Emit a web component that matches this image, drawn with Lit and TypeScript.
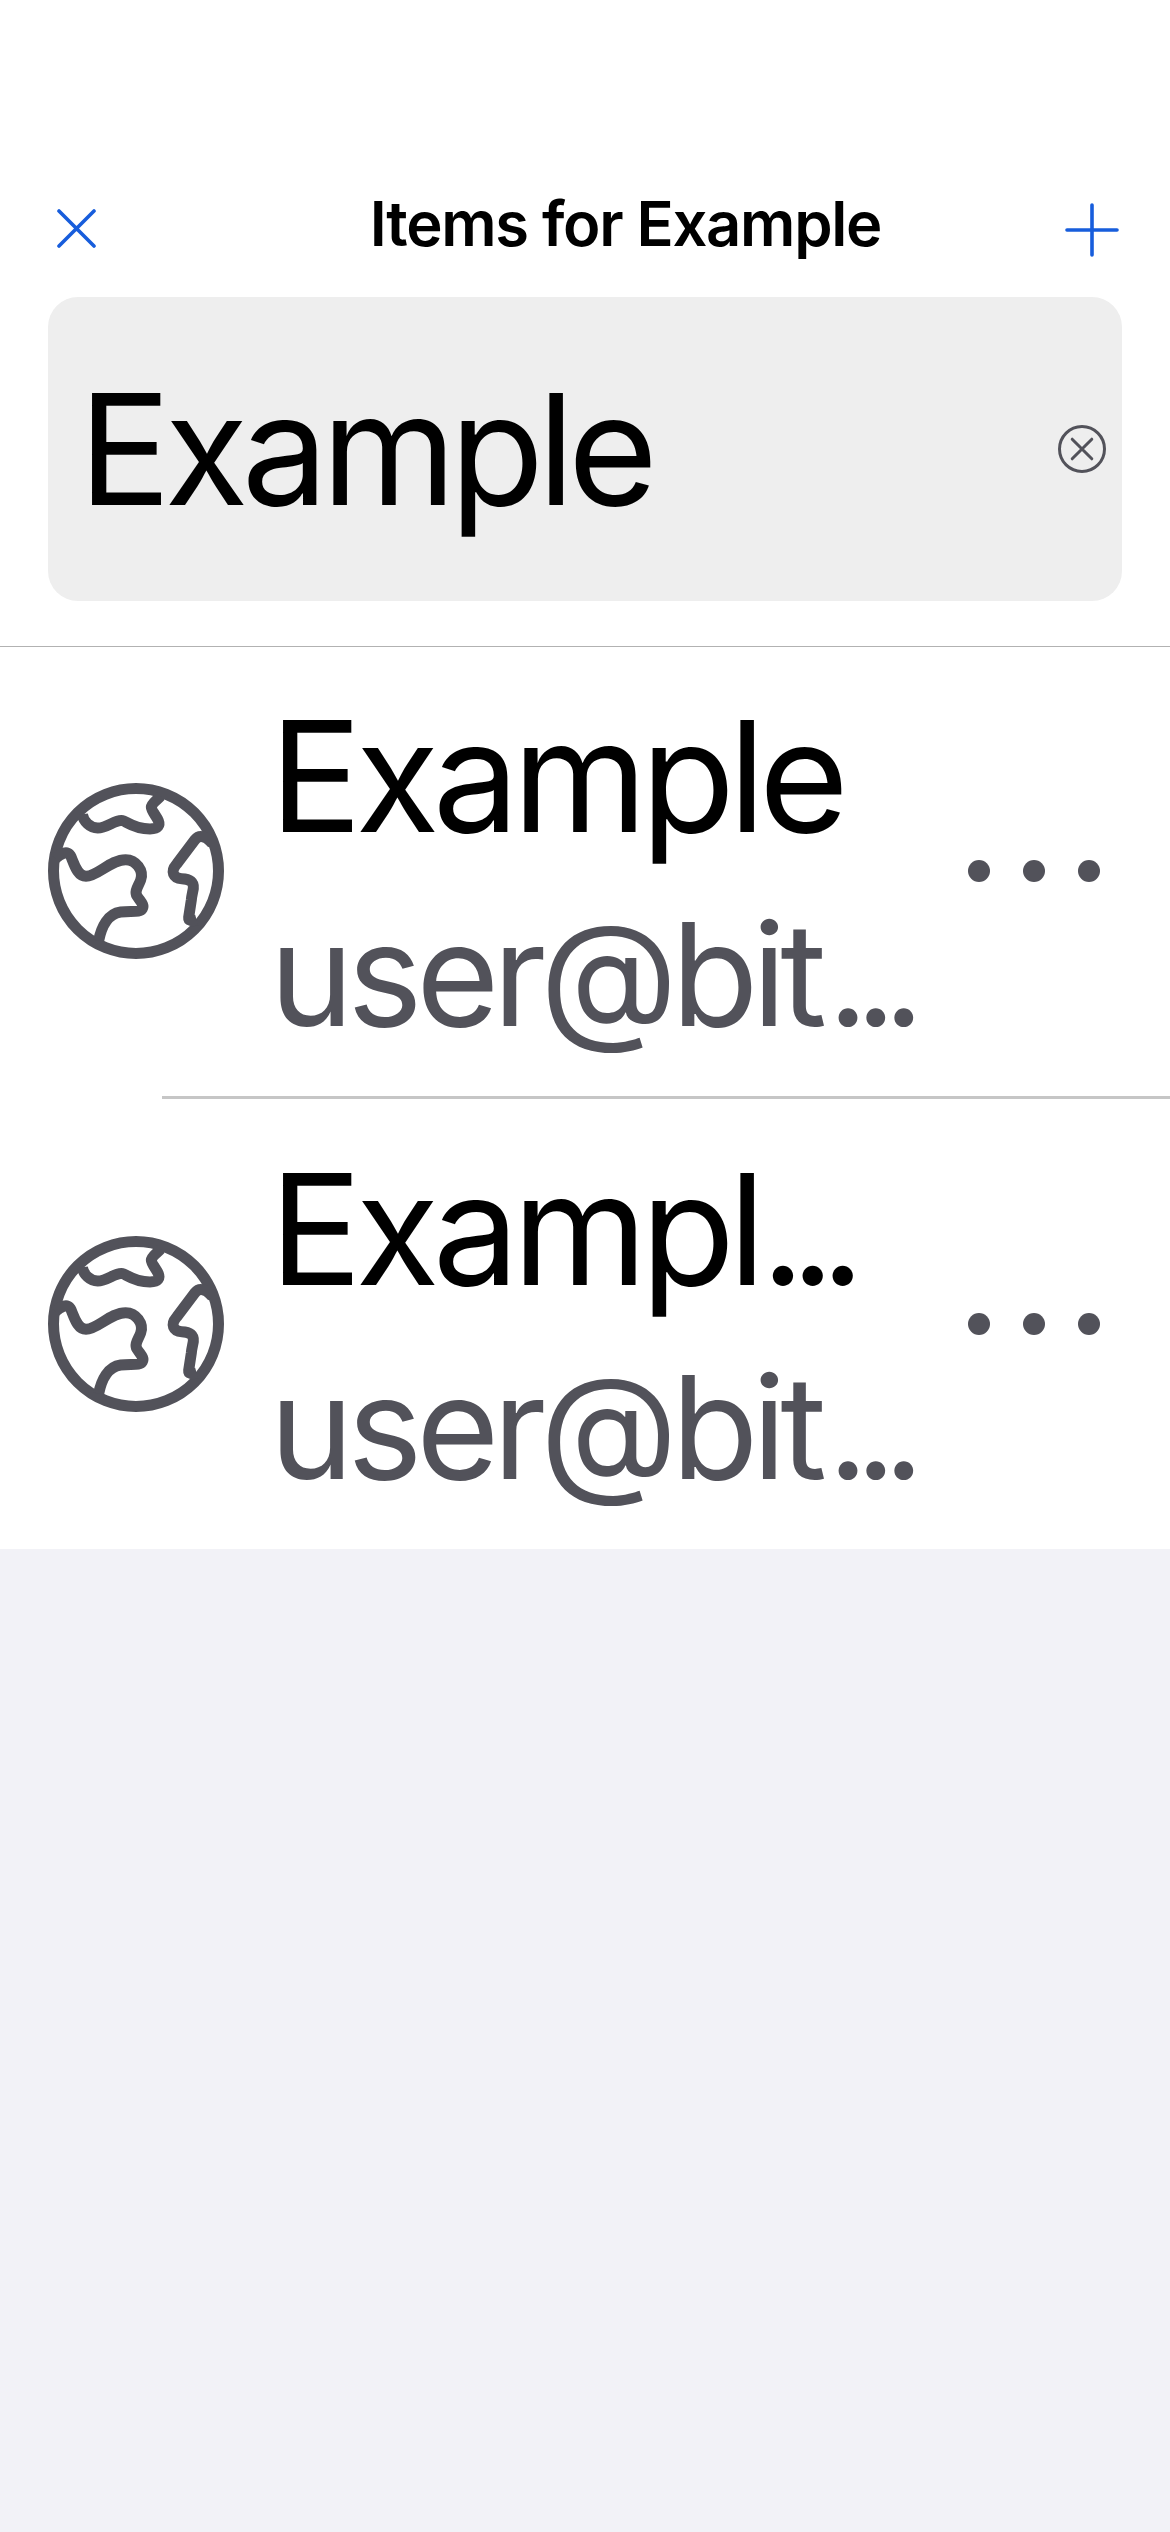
import { LitElement, html, css, svg } from "lit";
import { customElement, property, state } from "lit/decorators.js";

interface VaultItem {
  name: string;
  nameCut: boolean;
  user: string;
}

const globe = svg`
  <circle cx="318" cy="333" r="247.5"></circle>
  <path d="M157 163C160 184 180 204 203 204C233 204 256 177 278 182C288 184 312 207 360 207C386 207 390 195 385 182C380 169 364 153 364 141C364 131 378 123 392 108"></path>
  <path d="M76 296C90 282 114 268 123 290C134 317 143 349 168 349C202 349 242 299 287 299C318 299 342 332 332 360C326 377 312 393 321 408C330 423 344 434 337 446C330 459 303 452 272 456C234 461 214 501 206 542"></path>
  <path d="M548 252C530 228 508 223 495 239L440 312C420 335 430 355 455 356C480 357 492 366 490 385C488 398 485 406 484 420L476 472C475 483 486 484 500 480"></path>
`;

@customElement("vault-row")
export class VaultRow extends LitElement {
  @property({ attribute: false }) item!: VaultItem;

  static styles = css`
    :host {
      display: flex;
      align-items: center;
      box-sizing: border-box;
      height: 450px;
      padding: 0 70px 0 48px;
      background: #fff;
    }
    .globe {
      flex: none;
      width: 176px;
      height: 176px;
      fill: none;
      stroke: #52525a;
      stroke-width: 33;
    }
    .labels {
      flex: 1;
      min-width: 0;
      display: flex;
      flex-direction: column;
      gap: 15px;
      padding: 35px 0 34px 45.5px;
      white-space: nowrap;
    }
    .name {
      font-size: 154px;
      line-height: 190px;
      letter-spacing: -6.68px;
      color: #000;
    }
    .user {
      font-size: 142.4px;
      line-height: 176px;
      letter-spacing: -6.35px;
      color: #52525a;
    }
    .name .cut {
      margin-left: 1.7px;
      letter-spacing: -14.5px;
    }
    .user .cut {
      margin-left: 7px;
      letter-spacing: -13.1px;
    }
    .more {
      flex: none;
      width: 132px;
      height: 22px;
      fill: #52525a;
    }
  `;

  render() {
    const cut = html`<span class="cut">...</span>`;
    return html`
      <svg class="globe" viewBox="54 69 528 528">${globe}</svg>
      <div class="labels">
        <div class="name">${this.item.name}${this.item.nameCut ? cut : null}</div>
        <div class="user">${this.item.user}${cut}</div>
      </div>
      <svg class="more" viewBox="0 0 132 22">
        <circle cx="11" cy="11" r="11"></circle>
        <circle cx="66" cy="11" r="11"></circle>
        <circle cx="121" cy="11" r="11"></circle>
      </svg>
    `;
  }
}

@customElement("app-root")
export class AppRoot extends LitElement {
  @state() private items: VaultItem[] = [
    { name: "Example", nameCut: false, user: "user@bit" },
    { name: "Exampl", nameCut: true, user: "user@bit" },
  ];

  static styles = css`
    :host {
      display: block;
      min-height: 2532px;
      background: #f2f2f7;
      font-family: Inter, "Liberation Sans", sans-serif;
    }
    .header {
      position: relative;
      z-index: 1;
      box-sizing: border-box;
      height: 646px;
      padding-top: 179px;
      background: #fff;
      box-shadow: 0 1px 0 #b2b2b2;
    }
    .nav {
      display: flex;
      align-items: center;
      height: 100px;
      padding: 0 51px 0 57px;
    }
    .nav svg {
      flex: none;
      fill: none;
      stroke: #175ddc;
      stroke-linecap: round;
    }
    .close {
      width: 39px;
      height: 39px;
      margin-bottom: 1px;
      stroke-width: 3.6;
    }
    .title {
      margin: 0 auto 0 273.7px;
      padding-bottom: 11px;
      font-size: 61.5px;
      line-height: 76px;
      font-weight: 600;
      letter-spacing: -1.3px;
      white-space: nowrap;
      color: #000;
    }
    .add {
      width: 54px;
      height: 54px;
      margin-top: 2px;
      stroke-width: 3.6;
    }
    .search {
      display: flex;
      align-items: center;
      justify-content: space-between;
      box-sizing: border-box;
      height: 304px;
      margin: 18px 48px 0;
      padding: 0 16px 0 30.5px;
      border-radius: 30px;
      background: #eee;
    }
    .query {
      font-size: 154px;
      line-height: 190px;
      letter-spacing: -6.68px;
      color: #000;
    }
    .clear {
      width: 48px;
      height: 48px;
      fill: none;
      stroke: #52525a;
      stroke-width: 3;
      stroke-linecap: round;
    }
    .list {
      background: #fff;
    }
    .rule {
      height: 3px;
      margin-left: 162px;
      background: #c6c6c6;
    }
  `;

  render() {
    return html`
      <header class="header">
        <div class="nav">
          <svg class="close" viewBox="0 0 39 39"><path d="M2 2L37 37M37 2L2 37"></path></svg>
          <div class="title">Items for Example</div>
          <svg class="add" viewBox="0 0 54 54"><path d="M27 2V52M2 27H52"></path></svg>
        </div>
        <div class="search">
          <div class="query">Example</div>
          <svg class="clear" viewBox="0 0 48 48">
            <circle cx="24" cy="24" r="22.5"></circle>
            <path d="M14.2 14.2L33.8 33.8M33.8 14.2L14.2 33.8"></path>
          </svg>
        </div>
      </header>
      <main class="list">
        ${this.items.map(
          (item, i) => html`
            ${i > 0 ? html`<div class="rule"></div>` : null}
            <vault-row .item=${item}></vault-row>
          `
        )}
      </main>
    `;
  }
}
